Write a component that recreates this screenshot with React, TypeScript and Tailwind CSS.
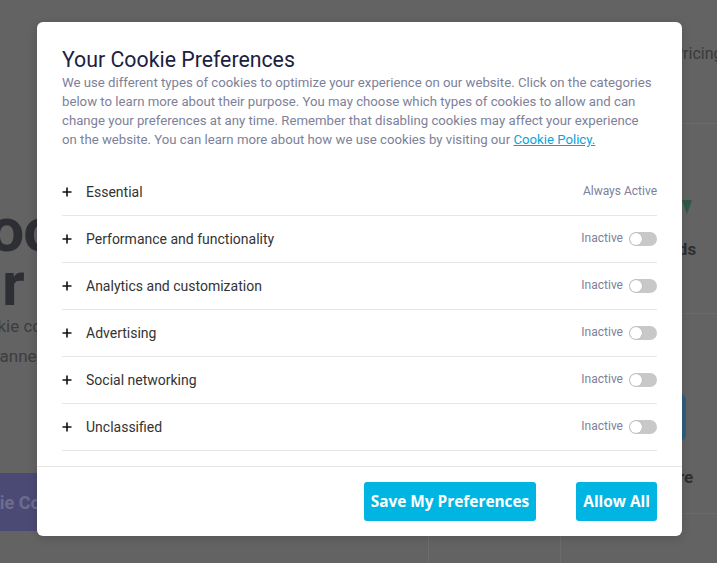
import React from "react";

const rows = [
  "Essential",
  "Performance and functionality",
  "Analytics and customization",
  "Advertising",
  "Social networking",
  "Unclassified",
];

function Plus() {
  return (
    <svg width="10" height="10" viewBox="0 0 10 10" className="shrink-0">
      <path d="M5 0.5V9.5M0.5 5H9.5" stroke="#111" strokeWidth="1.6" />
    </svg>
  );
}

function Toggle() {
  return (
    <span className="relative inline-block h-[14px] w-[28px] rounded-full bg-[#c8c8c8]">
      <span className="absolute left-[1px] top-[1px] h-[12px] w-[12px] rounded-full bg-white shadow-[0_0_0_0.5px_#b5b5b5]" />
    </span>
  );
}

export default function App() {
  return (
    <div className="relative h-[563px] w-[717px] overflow-hidden bg-[#636363] font-['Roboto',sans-serif]">
      {/* dimmed page behind */}
      <div className="flex h-full">
        <div className="flex w-[400px] shrink-0 flex-col pt-[203px]">
          <div className="-ml-[52px] whitespace-nowrap text-[62px] font-bold leading-[54px] tracking-[-1px] text-[#2e2e35]">
            Good cookie
          </div>
          <div className="ml-[2px] whitespace-nowrap text-[62px] font-bold leading-[54px] tracking-[-1px] text-[#2e2e35]">
            r your site
          </div>
          <div className="-ml-[33px] whitespace-nowrap text-[17px] leading-[30px] text-[#3d3d3d]">
            Cookie consent made simple
          </div>
          <div className="-ml-[10px] whitespace-nowrap text-[17px] leading-[30px] text-[#3d3d3d]">
            banner for every website
          </div>
          <div className="mt-[102px] flex h-[58px] w-[260px] items-center -ml-[62px] bg-[#4b4a74] pl-[20px] text-[18px] font-bold text-[#6e6c8e]">
            Cookie Consent
          </div>
        </div>
        <div className="ml-[240px] flex w-[220px] shrink-0 flex-col">
          <div className="flex h-[123px] items-start pt-[42px] text-[16px] text-[#3a3a3a] ml-[33px]">
            Pricing
          </div>
          <div className="h-px bg-[#6b6b6b]" />
          <div className="flex h-[189px] flex-col pt-[76px]">
            <svg width="14" height="16" viewBox="0 0 14 16" className="ml-[40px]">
              <path d="M2 0L12 0L7 14Z" fill="#2f5a45" />
            </svg>
            <div className="mt-[21px] -ml-[28px] text-[17px] font-bold text-[#2f2f2f]">Downloads</div>
          </div>
          <div className="h-px bg-[#6a6a6a]" />
          <div className="flex h-[199px] flex-col pt-[79px]">
            <div className="ml-[2px] h-[49px] w-[44px] rounded-[8px] bg-[#2d5e7e]" />
            <div className="mt-[23px] ml-[0px] text-[17px] font-bold text-[#2f2f2f]">Secure</div>
          </div>
          <div className="h-px bg-[#6a6a6a]" />
        </div>
      </div>
      <div className="absolute bottom-0 left-[428px] h-[30px] w-px bg-[#6d6d6d]" />
      <div className="absolute bottom-0 left-[560px] h-[30px] w-px bg-[#6d6d6d]" />

      {/* modal */}
      <div className="absolute left-[37px] top-[22px] flex h-[514px] w-[645px] flex-col rounded-[6px] bg-white shadow-[0_2px_10px_rgba(0,0,0,0.15)]">
        <div className="px-[25px] pt-[26px]">
          <h2 className="text-[21.3px] font-normal leading-[24px] text-[#1b2240]">
            Your Cookie Preferences
          </h2>
          <p className="mt-[1px] whitespace-nowrap text-[13.2px] leading-[19px] text-[#7d8199]">
            We use different types of cookies to optimize your experience on our website. Click on the categories
            <br />
            below to learn more about their purpose. You may choose which types of cookies to allow and can
            <br />
            change your preferences at any time. Remember that disabling cookies may affect your experience
            <br />
            on the website. You can learn more about how we use cookies by visiting our{" "}
            <a href="#" className="text-[#0aa4dc] underline">
              Cookie Policy.
            </a>
          </p>
          <div className="mt-[20px]">
            {rows.map((r, i) => (
              <div key={r} className="flex h-[47px] items-center border-b border-[#e6e6e6]">
                <Plus />
                <span className="ml-[14px] text-[14px] text-[#333333]">{r}</span>
                <div className="ml-auto flex items-center gap-[6px]">
                  {i === 0 ? (
                    <span className="-mt-[3px] text-[12px] text-[#7d8199]">Always Active</span>
                  ) : (
                    <>
                      <span className="-mt-[2px] text-[12px] text-[#7d8199]">Inactive</span>
                      <Toggle />
                    </>
                  )}
                </div>
              </div>
            ))}
          </div>
        </div>
        <div className="mt-auto flex justify-end gap-[40px] border-t border-[#e6e6e6] px-[25px] py-[15px]">
          <button className="h-[39px] rounded-[3px] bg-[#00b5e2] px-[7px] font-['Open_Sans',sans-serif] text-[15.4px] font-bold text-white">
            Save My Preferences
          </button>
          <button className="h-[39px] rounded-[3px] bg-[#00b5e2] px-[7px] font-['Open_Sans',sans-serif] text-[15.4px] font-bold text-white">
            Allow All
          </button>
        </div>
      </div>
    </div>
  );
}
